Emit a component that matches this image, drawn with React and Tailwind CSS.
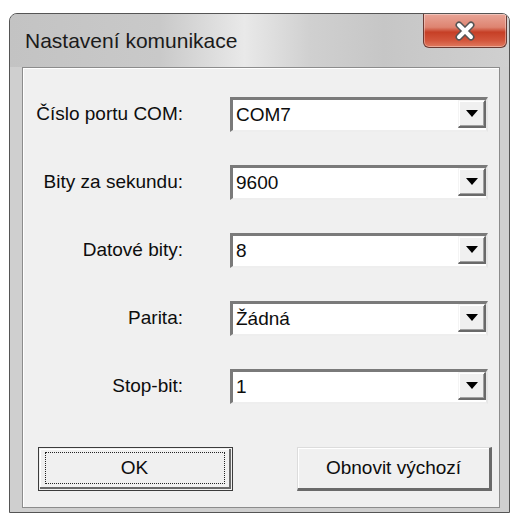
const fields = [
  { label: "Číslo portu COM:", value: "COM7" },
  { label: "Bity za sekundu:", value: "9600" },
  { label: "Datové bity:", value: "8" },
  { label: "Parita:", value: "Žádná" },
  { label: "Stop-bit:", value: "1" },
];

function CloseButton() {
  return (
    <button className="mr-[2px] flex h-[34px] w-[84px] items-center justify-center rounded-b-[6px] border border-t-0 border-[#6b3a33] bg-[linear-gradient(180deg,#e8a597_0%,#de8471_40%,#c63f26_55%,#d2553b_80%,#e07a5f_100%)] shadow-[inset_0_0_0_1px_rgba(255,255,255,0.35)]">
      <svg width="26" height="20" viewBox="0 0 26 20">
        <path d="M7 4 L19 16 M19 4 L7 16" stroke="#555" strokeWidth="7" strokeLinecap="round" fill="none" />
        <path d="M7 4 L19 16 M19 4 L7 16" stroke="#fff" strokeWidth="4" strokeLinecap="round" fill="none" />
      </svg>
    </button>
  );
}

function Combo({ value }) {
  return (
    <div className="ml-[47px] flex h-[35px] w-[258px] border-t-[3px] border-l-[3px] border-r-[2px] border-b-[2px] border-t-[#7a7a7a] border-l-[#7a7a7a] border-r-[#e6e6e6] border-b-[#eeeeee] bg-white">
      <div className="flex flex-1 items-center pl-[3px] text-[19px] text-[#0d0d0d]">{value}</div>
      {/* dropdown arrow button */}
      <div className="flex h-[28px] w-[28px] items-center justify-center border-t border-l border-t-[#f4f4f4] border-l-[#f4f4f4] border-r-[2px] border-b-[2px] border-r-[#6a6a6a] border-b-[#6a6a6a] bg-[#f0f0f0] shadow-[inset_1px_1px_0_#fff,inset_-1px_-1px_0_#a0a0a0]">
        <svg width="12" height="7" viewBox="0 0 12 7">
          <path d="M0 0 H12 L6 7 Z" fill="#000" />
        </svg>
      </div>
    </div>
  );
}

export default function App() {
  return (
    <div className="h-[513px] w-[513px] bg-white pl-[9px] pt-[13px] font-['Liberation_Sans',Arial,sans-serif]">
      <div className="flex h-[500px] w-[501px] flex-col overflow-hidden rounded-t-[8px] border border-[#555] bg-[#cfcfcf]">
        <div className="flex h-[53px] shrink-0 items-start justify-between bg-[linear-gradient(90deg,#c3c3c3_0%,#c9c9c9_30%,#e9e9e9_47%,#d0d0d0_60%,#c6c6c6_75%,#d0d0d0_100%)]">
          <span className="self-center pl-[15px] text-[21px] text-[#1b1b1b]">Nastavení komunikace</span>
          <CloseButton />
        </div>
        <div className="flex flex-1 pb-[4px] pl-[12px] pr-[9px]">
          <div className="flex flex-1 flex-col border border-[#8c8c8c] bg-[#f0f0f0] shadow-[inset_1px_1px_0_#fff]">
            <div className="flex flex-col gap-[33px] pt-[29px]">
              {fields.map((f) => (
                <div key={f.label} className="flex items-center">
                  <div className="w-[160px] text-right text-[19px] text-[#0d0d0d]">{f.label}</div>
                  <Combo value={f.value} />
                </div>
              ))}
            </div>
            <div className="mt-[43px] flex justify-between pl-[15px] pr-[7px]">
              <button className="h-[44px] w-[195px] border border-[#3c3c3c] bg-[#f0f0f0] p-[1px]">
                <div className="flex h-full w-full items-center justify-center border-r-[2px] border-b-[2px] border-r-[#6a6a6a] border-b-[#6a6a6a] shadow-[inset_1px_1px_0_#fff]">
                  <div className="flex h-[32px] w-[180px] items-center justify-center border border-dotted border-[#222] text-[19px] text-[#0d0d0d]">
                    OK
                  </div>
                </div>
              </button>
              <button className="flex h-[44px] w-[195px] items-center justify-center border-t border-l border-t-[#dcdcdc] border-l-[#dcdcdc] border-r-[3px] border-b-[3px] border-r-[#6a6a6a] border-b-[#6a6a6a] bg-[#f0f0f0] text-[19px] text-[#0d0d0d] shadow-[inset_1px_1px_0_#fff]">
                Obnovit výchozí
              </button>
            </div>
          </div>
        </div>
      </div>
    </div>
  );
}
